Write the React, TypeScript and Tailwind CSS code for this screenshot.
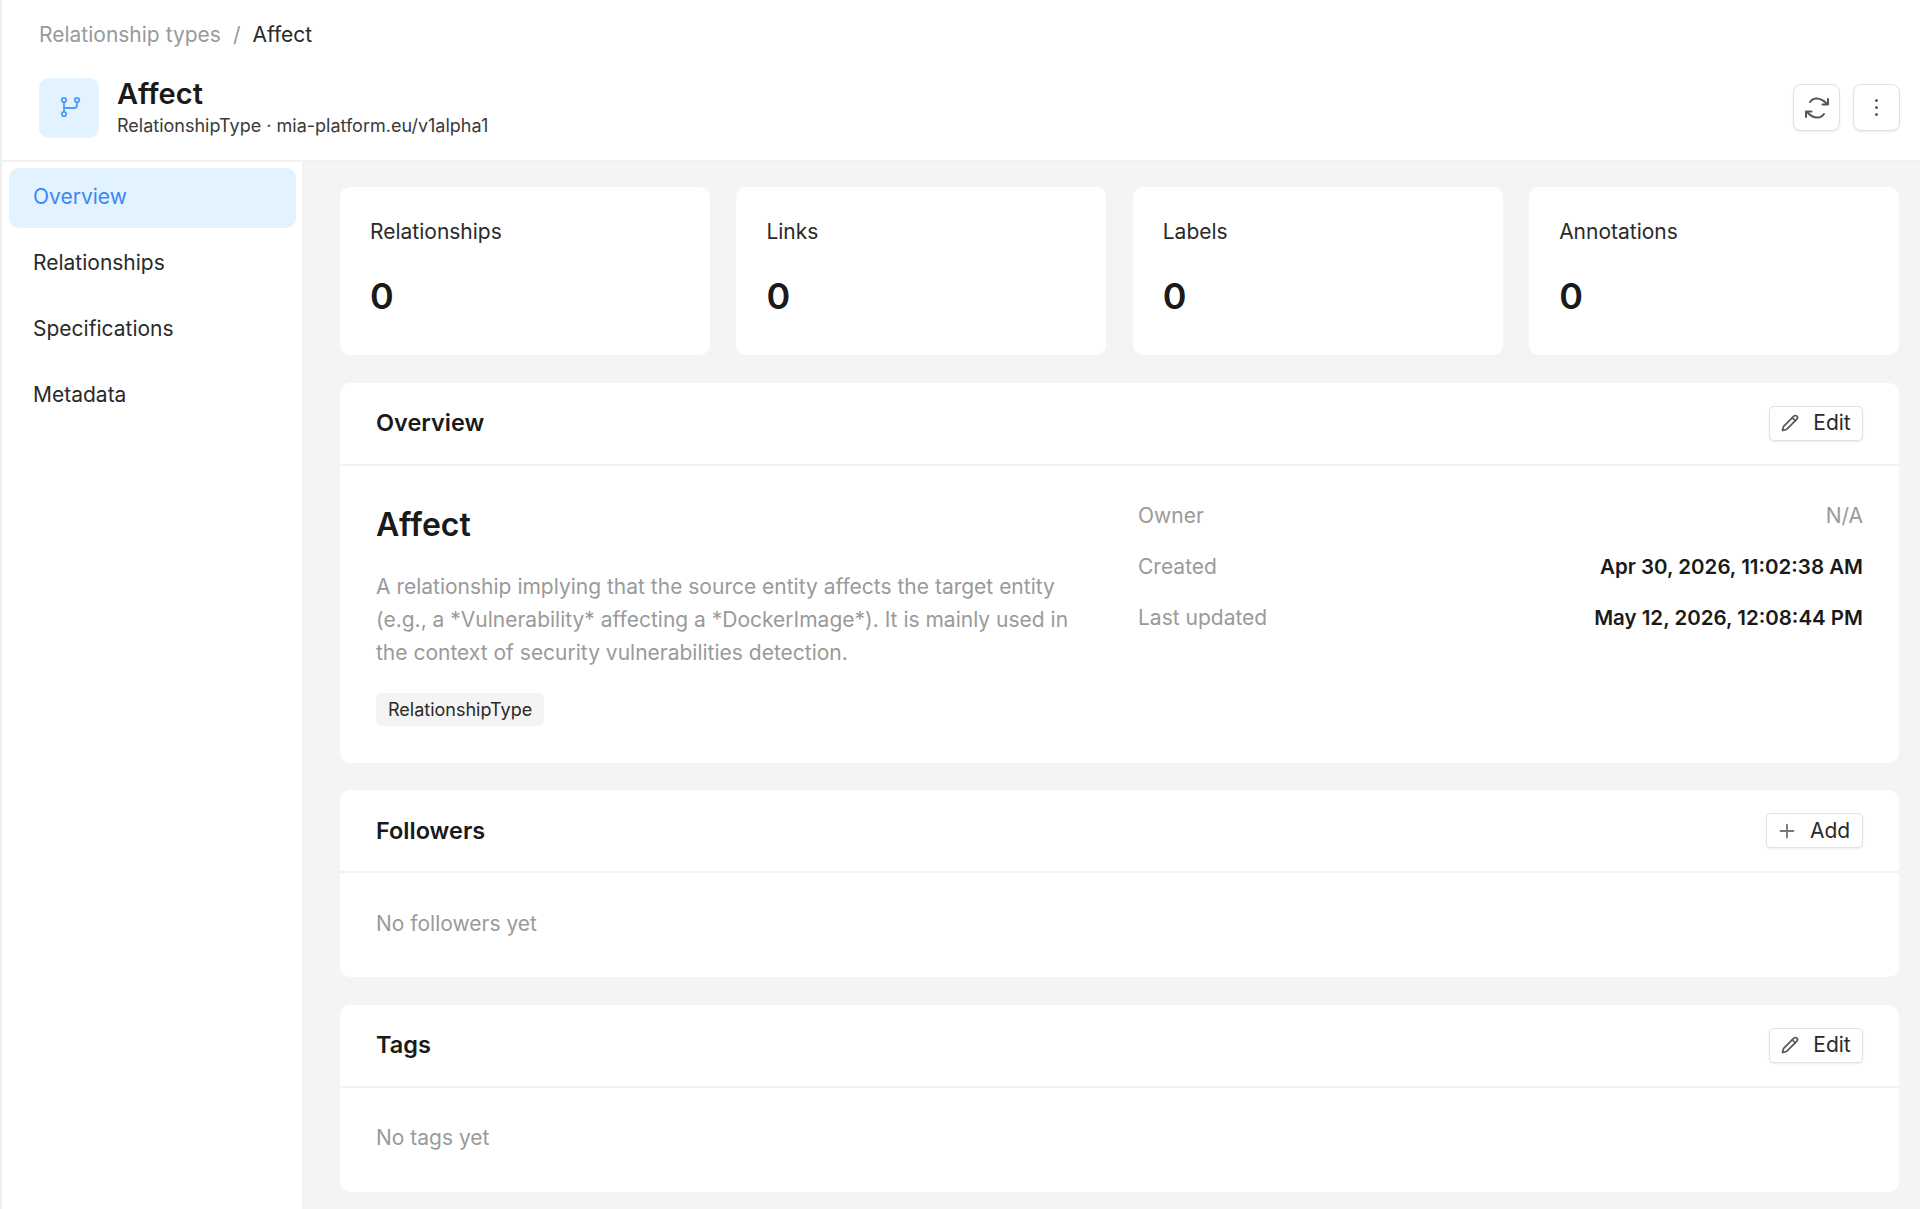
import React from "react";

const font = "font-['Inter',sans-serif]";

function GitIcon() {
  return (
    <svg width="24" height="24" viewBox="0 0 24 24" fill="none" stroke="#4a9cf5" strokeWidth="1.8" strokeLinecap="round" strokeLinejoin="round">
      <circle cx="7" cy="4" r="2.2" />
      <circle cx="20" cy="4" r="2.2" />
      <circle cx="7" cy="18" r="2.2" />
      <path d="M7 6.2v9.6" />
      <path d="M20 6.2V9a3 3 0 0 1-3 3H7" />
    </svg>
  );
}

function SyncIcon() {
  return (
    <svg width="24" height="24" viewBox="0 0 24 24" fill="none" stroke="#555555" strokeWidth="2" strokeLinecap="round" strokeLinejoin="round">
      <path d="M5 6C8 1.5 15 0.5 21.5 7.5" />
      <path d="M23 3v5.5h-5.5" />
      <path d="M19 18C16 22.5 9 23.5 2.5 16.5" />
      <path d="M1 21v-5.5h5.5" />
    </svg>
  );
}

function PencilIcon() {
  return (
    <svg width="18" height="18" viewBox="0 0 24 24" fill="none" stroke="#555555" strokeWidth="2.2" strokeLinecap="round" strokeLinejoin="round">
      <path d="M21.174 6.812a1 1 0 0 0-3.986-3.987L3.842 16.174a2 2 0 0 0-.5.83l-1.321 4.352a.5.5 0 0 0 .623.622l4.353-1.32a2 2 0 0 0 .83-.497z" />
      <path d="m15 5 4 4" />
    </svg>
  );
}

function PlusIcon() {
  return (
    <svg width="16" height="16" viewBox="0 0 24 24" fill="none" stroke="#777777" strokeWidth="2.8" strokeLinecap="round">
      <path d="M12 2.4v19.2M2.4 12h19.2" />
    </svg>
  );
}

function ActionButton({ icon, label, width, gap }: { icon: React.ReactNode; label: string; width: string; gap: string }) {
  return (
    <button className={`flex h-[35px] items-center justify-center rounded-[5px] border border-[#e2e2e2] bg-white text-[21px] text-[#2a2a2a] shadow-[0_1px_2px_rgba(0,0,0,0.08)] ${gap} ${width}`}>
      {icon}
      <span>{label}</span>
    </button>
  );
}

function Stat({ label }: { label: string }) {
  return (
    <div className="h-[168px] rounded-[10px] bg-white pl-[30px] pt-[32px]">
      <div className="text-[21px] leading-[26px] text-[#2a2a2a]">{label}</div>
      <div className="mt-[29px] text-[36px] font-semibold leading-[44px] text-[#1a1a1a]">0</div>
    </div>
  );
}

function Card({ title, action, children }: { title: string; action: React.ReactNode; children: React.ReactNode }) {
  return (
    <section className="rounded-[10px] bg-white">
      <header className="flex h-[83px] items-center justify-between border-b-2 border-[#f3f3f3] pl-[36px] pr-[36px]">
        <h2 className="text-[23.5px] font-semibold text-[#1a1a1a]">{title}</h2>
        {action}
      </header>
      {children}
    </section>
  );
}

const nav = ["Overview", "Relationships", "Specifications", "Metadata"];

export default function App() {
  return (
    <div className={`${font} flex h-[1209px] flex-col overflow-hidden border-l-2 border-[#f0f0f0] bg-white`}>
      <header className="flex h-[162px] shrink-0 flex-col border-b-2 border-[#f1f1f1] pl-[37px] pr-[20px]">
        <div className="mt-[22px] flex items-center gap-[12px] text-[21px] leading-[26px]">
          <span className="text-[#9a9a9a]">Relationship types</span>
          <span className="text-[#9a9a9a]">/</span>
          <span className="text-[#2a2a2a]">Affect</span>
        </div>
        <div className="mt-[29px] flex items-center">
          <div className="flex h-[60px] w-[60px] items-center justify-center rounded-[10px] bg-[#e3f2ff]">
            <GitIcon />
          </div>
          <div className="ml-[18px]">
            <h1 className="text-[29px] font-semibold leading-[34px] text-[#1a1a1a]">Affect</h1>
            <p className="mt-[3px] text-[18px] leading-[24px] text-[#3a3a3a]">RelationshipType · mia-platform.eu/v1alpha1</p>
          </div>
          <div className="ml-auto flex gap-[13px]">
            <button className="flex h-[47px] w-[47px] items-center justify-center rounded-[8px] border border-[#e2e2e2] bg-white shadow-[0_1px_2px_rgba(0,0,0,0.08)]">
              <SyncIcon />
            </button>
            <button className="flex h-[47px] w-[47px] flex-col items-center justify-center gap-[4px] rounded-[8px] border border-[#e2e2e2] bg-white shadow-[0_1px_2px_rgba(0,0,0,0.08)]">
              <span className="h-[3px] w-[3px] rounded-full bg-[#5a5a5a]" />
              <span className="h-[3px] w-[3px] rounded-full bg-[#5a5a5a]" />
              <span className="h-[3px] w-[3px] rounded-full bg-[#5a5a5a]" />
            </button>
          </div>
        </div>
      </header>

      <div className="flex min-h-0 flex-1">
        <nav className="flex w-[302px] shrink-0 flex-col gap-[6px] border-r-2 border-[#f3f3f3] pl-[7px] pr-[6px] pt-[6px]">
          {nav.map((n, i) => (
            <div
              key={n}
              className={
                i === 0
                  ? "flex h-[60px] items-center rounded-[10px] bg-[#e3f2ff] pl-[24px] pb-[2px] text-[21px] text-[#3b87f8]"
                  : "flex h-[60px] items-center pl-[24px] pb-[2px] text-[21px] text-[#2a2a2a]"
              }
            >
              {n}
            </div>
          ))}
        </nav>

        <main className="flex flex-1 flex-col gap-[27.5px] bg-[#f4f4f4] pb-[17px] pl-[36px] pr-[21px] pt-[25px]">
          <div className="grid grid-cols-4 gap-[26.5px]">
            <Stat label="Relationships" />
            <Stat label="Links" />
            <Stat label="Labels" />
            <Stat label="Annotations" />
          </div>

          <Card title="Overview" action={<ActionButton icon={<PencilIcon />} label="Edit" width="w-[94px]" gap="gap-[14px]" />}>
            <div className="flex h-[297px] pl-[36px] pr-[36px]">
              <div className="w-[710px] pt-[38px]">
                <h3 className="text-[32px] font-semibold leading-[42px] text-[#1a1a1a]">Affect</h3>
                <p className="mt-[24px] text-[21px] leading-[33px] text-[#9a9a9a]">
                  A relationship implying that the source entity affects the target entity
                  <br />
                  (e.g., a *Vulnerability* affecting a *DockerImage*). It is mainly used in
                  <br />
                  the context of security vulnerabilities detection.
                </p>
                <span className="mt-[24px] inline-flex h-[33px] items-center rounded-[5px] bg-[#f4f4f4] px-[12px] text-[18px] text-[#2a2a2a]">RelationshipType</span>
              </div>
              <dl className="ml-[52px] flex flex-1 flex-col gap-[21px] pt-[35px] text-[21px] leading-[30px]">
                <div className="flex justify-between">
                  <dt className="text-[#9a9a9a]">Owner</dt>
                  <dd className="text-[#9a9a9a]">N/A</dd>
                </div>
                <div className="flex justify-between">
                  <dt className="text-[#9a9a9a]">Created</dt>
                  <dd className="font-semibold text-[#1a1a1a] text-[20.5px]">Apr 30, 2026, 11:02:38 AM</dd>
                </div>
                <div className="flex justify-between">
                  <dt className="text-[#9a9a9a]">Last updated</dt>
                  <dd className="font-semibold text-[#1a1a1a] text-[20.5px]">May 12, 2026, 12:08:44 PM</dd>
                </div>
              </dl>
            </div>
          </Card>

          <Card title="Followers" action={<ActionButton icon={<PlusIcon />} label="Add" width="w-[97px]" gap="gap-[15px]" />}>
            <div className="flex h-[104px] items-center pb-[3px] pl-[36px] text-[21px] text-[#9a9a9a]">No followers yet</div>
          </Card>

          <Card title="Tags" action={<ActionButton icon={<PencilIcon />} label="Edit" width="w-[94px]" gap="gap-[14px]" />}>
            <div className="flex h-[104px] items-center pb-[4px] pl-[36px] text-[21px] text-[#9a9a9a]">No tags yet</div>
          </Card>
        </main>
      </div>
    </div>
  );
}
